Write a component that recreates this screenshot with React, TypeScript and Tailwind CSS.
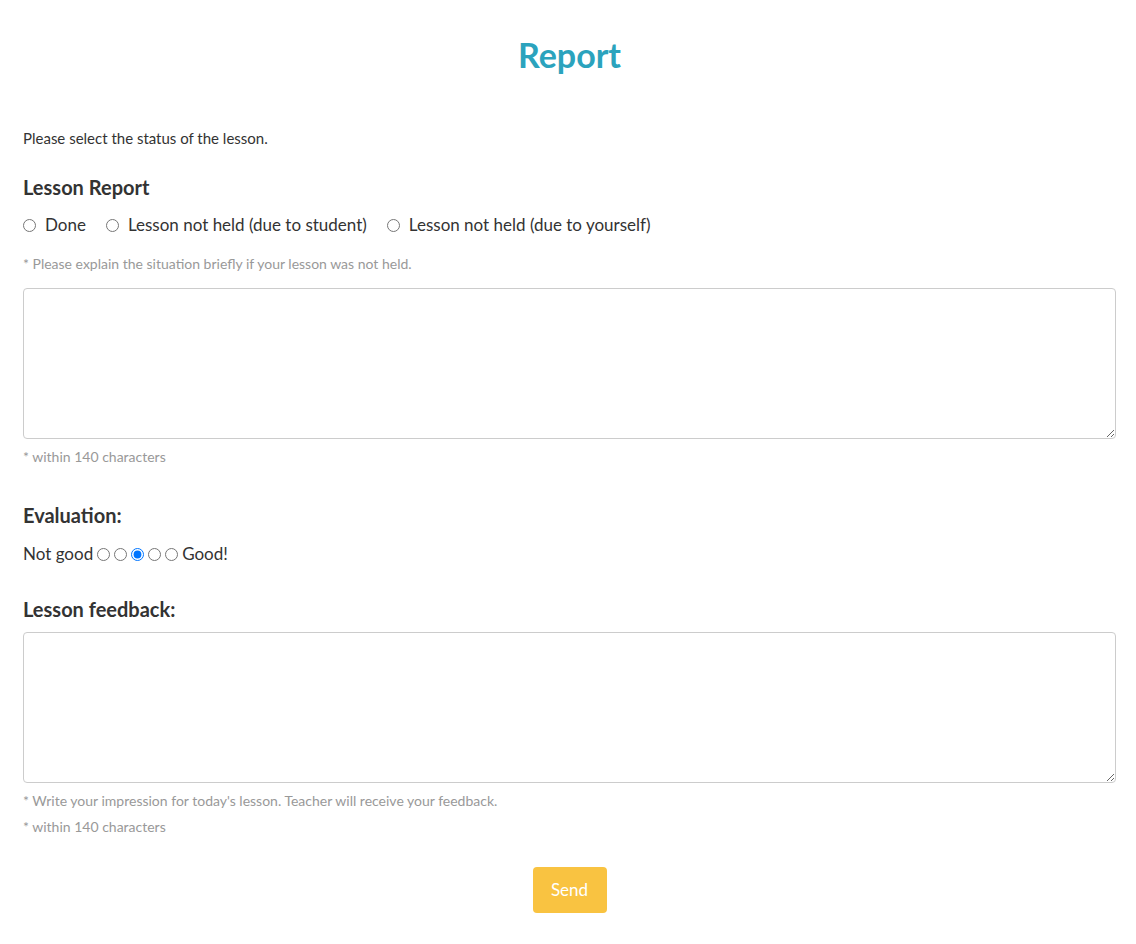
import React, { useState } from 'react';

const App: React.FC = () => {
  const [status, setStatus] = useState<string>('');
  const [score, setScore] = useState<number>(3);

  return (
    <div className="min-h-screen bg-white pl-[23px] pr-[20px] text-[#333] font-['Lato',sans-serif]">
      <h1 className="pt-[35px] text-center text-[34px] leading-[40px] font-bold text-[#2ba3bd]">Report</h1>

      <p className="mt-[53px] text-[15px] leading-[20px]">Please select the status of the lesson.</p>

      {/* Lesson status */}
      <h2 className="mt-[27px] text-[20px] leading-[24px] font-bold">Lesson Report</h2>
      <div className="mt-[14px] flex items-center gap-[20px] text-[17px] leading-[24px]">
        {['Done', 'Lesson not held (due to student)', 'Lesson not held (due to yourself)'].map((label) => (
          <label key={label} className="flex items-center gap-[9px] cursor-pointer">
            <input
              type="radio"
              name="status"
              checked={status === label}
              onChange={() => setStatus(label)}
              className="m-0 w-[13px] h-[13px]"
            />
            <span>{label}</span>
          </label>
        ))}
      </div>
      <p className="mt-[18px] text-[14px] leading-[18px] text-[#999]">
        * Please explain the situation briefly if your lesson was not held.
      </p>
      <textarea className="mt-[15px] block w-full h-[151px] rounded-[4px] border border-[#ccc] p-2 outline-none" />
      <p className="mt-[9px] text-[14px] leading-[18px] text-[#999]">* within 140 characters</p>

      {/* Evaluation */}
      <h2 className="mt-[37px] text-[20px] leading-[24px] font-bold">Evaluation:</h2>
      <div className="mt-[15px] flex items-center gap-[4px] text-[17px] leading-[24px]">
        <span>Not good</span>
        {[1, 2, 3, 4, 5].map((n) => (
          <input
            key={n}
            type="radio"
            name="score"
            checked={score === n}
            onChange={() => setScore(n)}
            className="m-0 w-[13px] h-[13px]"
          />
        ))}
        <span>Good!</span>
      </div>

      {/* Feedback */}
      <h2 className="mt-[31px] text-[20px] leading-[24px] font-bold">Lesson feedback:</h2>
      <textarea className="mt-[11px] block w-full h-[151px] rounded-[4px] border border-[#ccc] p-2 outline-none" />
      <p className="mt-[9px] text-[14px] leading-[18px] text-[#999]">
        * Write your impression for today's lesson. Teacher will receive your feedback.
      </p>
      <p className="mt-[8px] text-[14px] leading-[18px] text-[#999]">* within 140 characters</p>

      <div className="mt-[31px] flex justify-center">
        <button className="w-[74px] h-[46px] rounded-[4px] bg-[#f9c341] text-white text-[17px]">Send</button>
      </div>
    </div>
  );
};

export default App;
